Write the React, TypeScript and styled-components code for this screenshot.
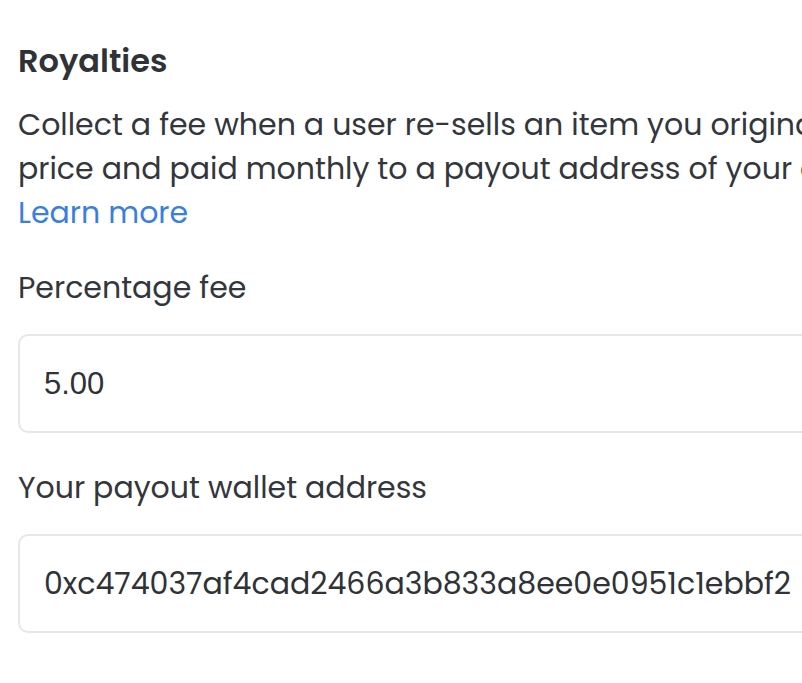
import React from 'react';
import styled, { createGlobalStyle } from 'styled-components';

const GlobalStyle = createGlobalStyle`
  html, body {
    margin: 0;
    padding: 0;
    background: #ffffff;
    overflow: hidden;
  }
  body {
    font-family: Poppins, Inter, "Noto Sans", sans-serif;
    color: #33363d;
  }
`;

const tekster = {
  title: 'Royalties',
  lineOne: 'Collect a fee when a user re-sells an item you originally created. This is deducted from the final sale',
  lineTwo: 'price and paid monthly to a payout address of your choosing.',
  learnMore: 'Learn more',
  feeLabel: 'Percentage fee',
  walletLabel: 'Your payout wallet address',
};

const Section = styled.section`
  width: 1400px;
  padding: 41px 0 0 18px;
  display: flex;
  flex-direction: column;
`;

const Title = styled.h2`
  margin: 0;
  font-size: 32px;
  line-height: 40px;
  font-weight: 600;
  color: #2f3237;
`;

const Description = styled.p`
  margin: 22px 0 0;
  font-size: 30px;
  line-height: 44px;
  white-space: nowrap;
`;

const LearnMore = styled.a`
  color: #3a7fdf;
  text-decoration: none;
  cursor: pointer;
`;

const Field = styled.div`
  display: flex;
  flex-direction: column;
  gap: 24px;
  margin-top: 31px;
  & + & {
    margin-top: 33px;
  }
`;

const Label = styled.label`
  font-size: 30px;
  line-height: 44px;
`;

const Input = styled.input<{ $system?: boolean }>`
  box-sizing: border-box;
  width: 1200px;
  height: 99px;
  padding: 0 24px;
  border: 2px solid #e6e7ea;
  border-radius: 10px;
  background: #ffffff;
  color: #2f3237;
  font-size: ${(p) => (p.$system ? '31px' : '30px')};
  font-family: ${(p) => (p.$system ? '"Liberation Sans", Arial, sans-serif' : 'Poppins, Inter, "Noto Sans", sans-serif')};
  outline: none;
`;

const App = () => {
  return (
    <>
      <GlobalStyle />
      <Section>
        <Title>{tekster.title}</Title>
        <Description>
          {tekster.lineOne}
          <br />
          {tekster.lineTwo}
          <br />
          <LearnMore>{tekster.learnMore}</LearnMore>
        </Description>
        <Field>
          <Label>{tekster.feeLabel}</Label>
          <Input $system defaultValue="5.00" />
        </Field>
        <Field>
          <Label>{tekster.walletLabel}</Label>
          <Input defaultValue="0xc474037af4cad2466a3b833a8ee0e0951c1ebbf2" />
        </Field>
      </Section>
    </>
  );
};

export default App;
